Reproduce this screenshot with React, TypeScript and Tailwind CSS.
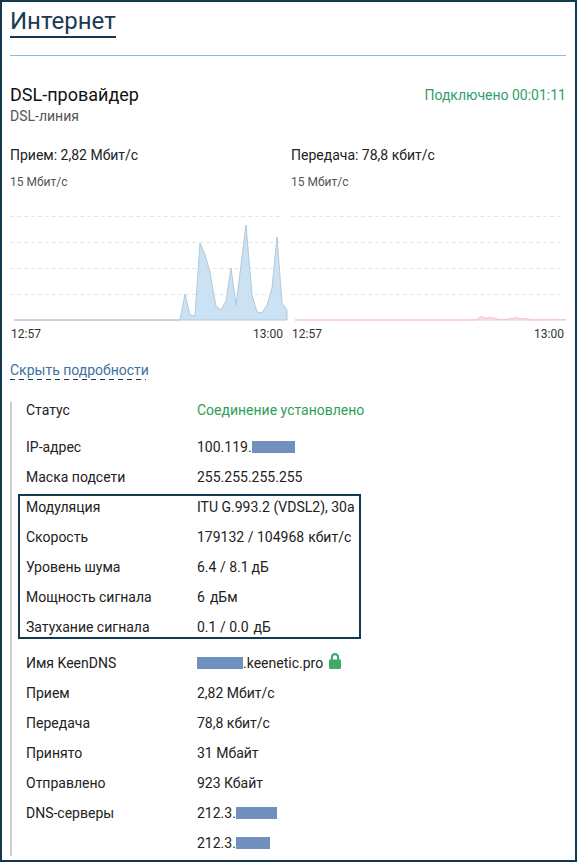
const rxPoints =
  "4,110 170,110 175,84 180,105 185,106 190,33 195,45 200,62 203,80 206,96 211,100 216,91 221,58 226,95 236,15 242,85 247,102 252,103 257,95 262,78 267,27 272,93 277,100 277,110";
const txPoints =
  "4,110 185,110 190,106.5 194,108 200,107.5 209,109.5 217,109 225,107.5 230,109 235,108.5 240,110 275,109.5 275,110";

function Chart({ points, fill, stroke }: { points: string; fill: string; stroke: string }) {
  return (
    <svg width="281" height="112" viewBox="0 0 281 112" className="block overflow-visible">
      {[6, 32, 58, 84].map((y) => (
        <line key={y} x1="0" x2="273" y1={y + 0.5} y2={y + 0.5} stroke="#d6ebf7" strokeDasharray="4 3" />
      ))}
      <polygon points={points} fill={fill} stroke={stroke} strokeWidth="1" />
    </svg>
  );
}

function Traffic({ title, points, fill, stroke }: { title: string; points: string; fill: string; stroke: string }) {
  return (
    <div className="w-[281px]">
      <div className="text-[14px] leading-[20px] text-[#222]">{title}</div>
      <div className="mt-[7px] text-[12px] leading-[20px] text-[#555]">15 Мбит/с</div>
      <div className="mt-[18px]">
        <Chart points={points} fill={fill} stroke={stroke} />
      </div>
      <div className="mt-[4px] flex w-[273px] justify-between pl-[1px] text-[12px] leading-[16px] text-[#333]">
        <span>12:57</span>
        <span>13:00</span>
      </div>
    </div>
  );
}

function Mask({ width }: { width: string }) {
  return <span className={`inline-block h-[12px] bg-[#7091bd] align-[-1px] ${width}`} />;
}

function Row({ label, children, boxed }: { label?: string; children: React.ReactNode; boxed?: boolean }) {
  return (
    <div className={`flex h-[22px] items-center text-[14px] leading-[22px] text-[#222] ${boxed ? "pl-[6px]" : "pl-[8px]"}`}>
      <div className="w-[171px] shrink-0">{label}</div>
      <div className="whitespace-nowrap">{children}</div>
    </div>
  );
}

export default function App() {
  return (
    <div className="box-border h-[862px] w-[577px] overflow-hidden border-2 border-[#14384f] bg-white pl-[8px] pr-[9px] font-['Roboto',sans-serif]">
      <div className="flex border-b border-[#8fb9d6] pb-[17px] pt-[4px]">
        <h1 className="border-b-2 border-[#14384f] text-[24px] font-normal leading-[30px] text-[#1a3a52]">Интернет</h1>
      </div>

      <div className="mt-[27px] flex items-start justify-between">
        <div>
          <div className="text-[18px] leading-[24px] text-[#111]">DSL-провайдер</div>
          <div className="text-[14px] leading-[18px] text-[#555]">DSL-линия</div>
        </div>
        <div className="text-[14px] leading-[24px] text-[#2e9e6b]">Подключено 00:01:11</div>
      </div>

      <div className="mt-[20px] flex">
        <Traffic title="Прием: 2,82 Мбит/с" points={rxPoints} fill="#cae2f3" stroke="#b4c8d6" />
        <Traffic title="Передача: 78,8 кбит/с" points={txPoints} fill="#fbe3e5" stroke="#f3c6cb" />
      </div>

      <div className="mt-[19px] flex">
        <div className="flex flex-col">
          <span className="text-[14px] leading-[18px] text-[#40709c]">Скрыть подробности</span>
          <span className="h-px w-[136px] bg-[repeating-linear-gradient(90deg,#14384f_0_5px,transparent_5px_9px)]" />
        </div>
      </div>

      <div className="mt-[22px] flex flex-col gap-2 border-l-2 border-[#cccccc] pb-[2px] pl-[6px]">
        <div className="-mt-[3px]">
          <Row label="Статус">
            <span className="text-[#2f9e57]">Соединение установлено</span>
          </Row>
        </div>
        <div className="mt-[7px]">
          <Row label="IP-адрес">
            100.119.<Mask width="w-[43px]" />
          </Row>
        </div>
        <Row label="Маска подсети">255.255.255.255</Row>

        <div className="-mt-[2px] mb-[5px] box-border flex h-[145px] w-[343px] flex-col gap-2 border-2 border-[#14384f]">
          <Row boxed label="Модуляция">ITU G.993.2 (VDSL2), 30a</Row>
          <Row boxed label="Скорость">
            179132 / 104968<span className="ml-[4px]">кбит/с</span>
          </Row>
          <Row boxed label="Уровень шума">
            6.4 / 8.1<span className="ml-[3px]">дБ</span>
          </Row>
          <Row boxed label="Мощность сигнала">
            6<span className="ml-[5px]">дБм</span>
          </Row>
          <Row boxed label="Затухание сигнала">
            0.1 / 0.0<span className="ml-[5px]">дБ</span>
          </Row>
        </div>

        <Row label="Имя KeenDNS">
          <span className="inline-flex items-center">
            <Mask width="w-[46px]" />
            .keenetic.pro
            <svg width="12" height="16" viewBox="0 0 12 16" className="ml-[6px] -mt-[4px]">
              <path d="M2.9 7V4.2a3.1 3.1 0 0 1 6.2 0V7" fill="none" stroke="#3fa96a" strokeWidth="2.2" />
              <rect x="0" y="6.5" width="12" height="9.5" rx="1.2" fill="#3fa96a" />
            </svg>
          </span>
        </Row>
        <Row label="Прием">2,82 Мбит/с</Row>
        <Row label="Передача">78,8 кбит/с</Row>
        <Row label="Принято">31 Мбайт</Row>
        <Row label="Отправлено">923 Кбайт</Row>
        <Row label="DNS-серверы">
          212.3.<Mask width="w-[41px]" />
        </Row>
        <Row>
          212.3.<Mask width="w-[34px]" />
        </Row>
      </div>
    </div>
  );
}
